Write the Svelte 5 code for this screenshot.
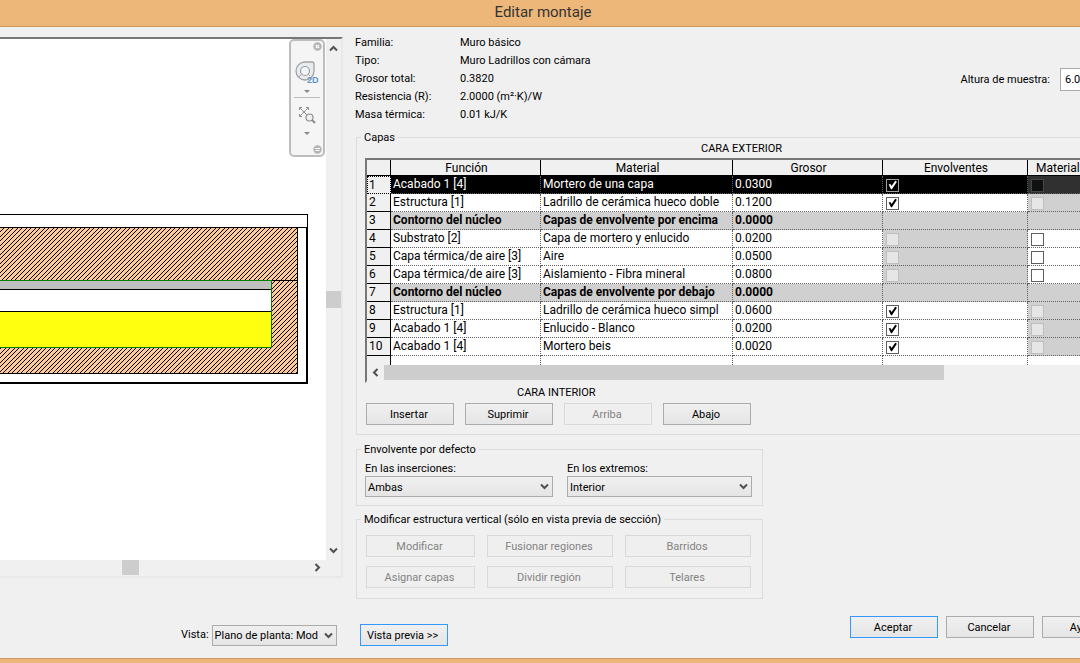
<script lang="ts">
  interface Layer {
    fn: string;
    material: string;
    thickness: string;
    wraps?: boolean;
    core?: boolean;
    structural?: boolean;
  }

  const info = [
    ['Familia:', 'Muro básico'],
    ['Tipo:', 'Muro Ladrillos con cámara'],
    ['Grosor total:', '0.3820'],
    ['Resistencia (R):', '2.0000 (m²·K)/W'],
    ['Masa térmica:', '0.01 kJ/K']
  ];

  // wraps / structural: left out means the box is disabled for that layer
  const layers: Layer[] = [
    { fn: 'Acabado 1 [4]', material: 'Mortero de una capa', thickness: '0.0300', wraps: true },
    { fn: 'Estructura [1]', material: 'Ladrillo de cerámica hueco doble', thickness: '0.1200', wraps: true },
    { fn: 'Contorno del núcleo', material: 'Capas de envolvente por encima', thickness: '0.0000', core: true },
    { fn: 'Substrato [2]', material: 'Capa de mortero y enlucido', thickness: '0.0200', structural: true },
    { fn: 'Capa térmica/de aire [3]', material: 'Aire', thickness: '0.0500', structural: true },
    { fn: 'Capa térmica/de aire [3]', material: 'Aislamiento - Fibra mineral', thickness: '0.0800', structural: true },
    { fn: 'Contorno del núcleo', material: 'Capas de envolvente por debajo', thickness: '0.0000', core: true },
    { fn: 'Estructura [1]', material: 'Ladrillo de cerámica hueco simpl', thickness: '0.0600', wraps: true },
    { fn: 'Acabado 1 [4]', material: 'Enlucido - Blanco', thickness: '0.0200', wraps: true },
    { fn: 'Acabado 1 [4]', material: 'Mortero beis', thickness: '0.0020', wraps: true }
  ];

  const verticalTools = ['Modificar', 'Fusionar regiones', 'Barridos', 'Asignar capas', 'Dividir región', 'Telares'];

  let selected = $state(0);
</script>

{#snippet chevron(dir: string)}
  <svg class="chevron {dir}" width="9" height="9" viewBox="0 0 9 9" aria-hidden="true">
    <path d="M1 2.5 4.5 6 8 2.5" fill="none" stroke="#505050" stroke-width="2" />
  </svg>
{/snippet}

<div class="dialog">
  <header class="titlebar">Editar montaje</header>

  <main class="content">
    <section class="preview" aria-label="Vista previa">
      <div class="canvas">
        <svg class="wall" width="326" height="400" viewBox="0 0 326 400" shape-rendering="crispEdges" aria-hidden="true">
          <defs>
            <pattern id="brick" width="9" height="9" patternUnits="userSpaceOnUse">
              <rect width="9" height="9" fill="#ffca99" />
              <path
                d="M8 0h1v1h-1zM7 1h1v1h-1zM6 2h1v1h-1zM5 3h1v1h-1zM4 4h1v1h-1zM3 5h1v1h-1zM2 6h1v1h-1zM1 7h1v1h-1zM0 8h1v1h-1z
                   M3 0h1v1h-1zM2 1h1v1h-1zM1 2h1v1h-1zM0 3h1v1h-1zM8 4h1v1h-1zM7 5h1v1h-1zM6 6h1v1h-1zM5 7h1v1h-1zM4 8h1v1h-1z"
                fill="#000"
              />
            </pattern>
          </defs>
          <path d="M0 175h308v14h-308z" fill="#000" />
          <path d="M0 176h307v12h-307z" fill="#fff" />
          <path d="M306 188h2v157h-308v-2h306z" fill="#000" />
          <rect y="189" width="297" height="145" fill="url(#brick)" />
          <path d="M297 189h1v146h-298v-1h297zM272 241h25v1h-25z" fill="#000" />
          <rect y="241" width="272" height="68" fill="#008000" />
          <rect y="242" width="271" height="8" fill="#c0c0c0" />
          <rect y="251" width="271" height="21" fill="#fff" />
          <path d="M0 250h271v1h-271zM0 272h271v1h-271z" fill="#000" />
          <rect y="273" width="271" height="35" fill="#ffff10" />
        </svg>

        <div class="navbar">
          <button class="mini" aria-label="Cerrar">
            <svg width="9" height="9" viewBox="0 0 9 9"><circle cx="4.5" cy="4.5" r="4.2" fill="#b4b4b4" /><path d="m2.8 2.8 3.4 3.4m0-3.4L2.8 6.2" stroke="#fff" stroke-width="1.2" /></svg>
          </button>
          <button class="wheel" aria-label="Rueda de navegación 2D">
            <svg width="26" height="26" viewBox="0 0 26 26">
              <path d="M2 12a9 9 0 0 1 9-9h7a2 2 0 0 1 2 2v7a9 9 0 0 1-18 0Z" fill="#e8ecee" stroke="#a2a2a2" stroke-width="1.3" />
              <circle cx="11" cy="12" r="4.5" fill="#f4f5f6" stroke="#9c9ca4" stroke-width="1.2" />
              <path d="m5 18 3-3.500M14 15l2 2" stroke="#aaa" />
              <text x="13" y="24" class="two-d">2D</text>
            </svg>
          </button>
          <span class="tri"></span>
          <hr />
          <button class="zoom" aria-label="Zoom">
            <svg width="18" height="18" viewBox="0 0 18 18" fill="none" stroke="#8e8e8e">
              <path d="M2 2l8 8M10 2l-8 8M1.5 4V1.5H4M8 1.5h2.5V4M1.5 8v2.5H4" />
              <circle cx="11.5" cy="11.5" r="3.5" fill="#edf1f3" stroke-width="1.2" />
              <path d="m14 14 3 3" stroke-width="2" />
            </svg>
          </button>
          <span class="tri"></span>
          <button class="mini last" aria-label="Opciones">
            <svg width="9" height="9" viewBox="0 0 9 9"><circle cx="4.5" cy="4.5" r="4.2" fill="#b4b4b4" /><path d="M2 3.5h5M2.5 5.5h4" stroke="#fff" /></svg>
          </button>
        </div>
      </div>
      <div class="vbar">
        {@render chevron('up')}
        <span class="thumb"></span>
        {@render chevron('down')}
      </div>
      <div class="hbar">
        <span class="thumb"></span>
        {@render chevron('right')}
      </div>
    </section>

    <section class="settings">
      <div class="summary">
        <dl>
          {#each info as [name, value]}
            <dt>{name}</dt>
            <dd>{value}</dd>
          {/each}
        </dl>
        <div class="sample">
          <label for="sample-height">Altura de muestra:</label>
          <input id="sample-height" type="text" value="6.0000" />
        </div>
      </div>

      <fieldset class="layers">
        <legend>Capas</legend>
        <div class="face exterior">CARA EXTERIOR</div>
        <div class="grid">
          <table>
            <colgroup>
              <col class="c-num" /><col class="c-fn" /><col class="c-mat" /><col class="c-thick" /><col class="c-wrap" /><col />
            </colgroup>
            <thead>
              <tr>
                <th></th>
                <th>Función</th>
                <th>Material</th>
                <th>Grosor</th>
                <th>Envolventes</th>
                <th class="cut">Material</th>
              </tr>
            </thead>
            <tbody>
              {#each layers as layer, i}
                <tr class:selected={i === selected} class:core={layer.core} onclick={() => (selected = i)}>
                  <th scope="row">{i + 1}</th>
                  <td>{layer.fn}</td>
                  <td>{layer.material}</td>
                  <td>{layer.thickness}</td>
                  <td class:off={!layer.wraps}>
                    {#if !layer.core}
                      <input type="checkbox" aria-label="Envolventes {i + 1}" checked={layer.wraps} disabled={!layer.wraps} />
                    {/if}
                  </td>
                  <td class:off={!layer.structural}>
                    {#if !layer.core}
                      <input type="checkbox" aria-label="Material estructural {i + 1}" disabled={!layer.structural} />
                    {/if}
                  </td>
                </tr>
              {/each}
              <tr class="rest"><th></th><td></td><td></td><td></td><td></td><td></td></tr>
            </tbody>
          </table>
          <div class="gridbar">
            {@render chevron('left')}
            <span class="thumb"></span>
          </div>
        </div>
        <div class="face interior">CARA INTERIOR</div>
        <div class="actions">
          <button class="btn">Insertar</button>
          <button class="btn">Suprimir</button>
          <button class="btn" disabled>Arriba</button>
          <button class="btn">Abajo</button>
        </div>
      </fieldset>

      <fieldset class="wrapping">
        <legend>Envolvente por defecto</legend>
        <div class="field">
          <label for="inserts">En las inserciones:</label>
          <div class="select">
            <select id="inserts"><option>Ambas</option></select>
            {@render chevron('down')}
          </div>
        </div>
        <div class="field">
          <label for="ends">En los extremos:</label>
          <div class="select">
            <select id="ends"><option>Interior</option></select>
            {@render chevron('down')}
          </div>
        </div>
      </fieldset>

      <fieldset class="vertical">
        <legend>Modificar estructura vertical (sólo en vista previa de sección)</legend>
        <div class="tools">
          {#each verticalTools as tool}
            <button class="btn" disabled>{tool}</button>
          {/each}
        </div>
      </fieldset>
    </section>
  </main>

  <footer>
    <div class="view">
      <label for="view">Vista:</label>
      <div class="select">
        <select id="view"><option>Plano de planta: Mod</option></select>
        {@render chevron('down')}
      </div>
      <button class="btn focus">Vista previa &gt;&gt;</button>
    </div>
    <div class="confirm">
      <button class="btn focus">Aceptar</button>
      <button class="btn">Cancelar</button>
      <button class="btn">Ayuda</button>
    </div>
  </footer>
</div>

<style>
  :global(body) {
    background: #f0f0f0;
  }

  .dialog,
  .dialog * {
    box-sizing: border-box;
  }

  .dialog {
    --ui: Roboto, 'Open Sans', sans-serif;
    display: flex;
    flex-direction: column;
    min-height: 100vh;
    overflow: hidden;
    background: #f0f0f0;
    border-bottom: 4px solid #edb77a;
    box-shadow: inset 0 -1px #c99a66;
    font: 11px/12px var(--ui);
    color: #000;
  }

  .titlebar {
    height: 27px;
    padding-left: 6px;
    background: #edb77a;
    border-bottom: 1px solid #cd9b62;
    font-size: 15px;
    line-height: 24px;
    text-align: center;
    color: #333;
  }

  .content {
    display: flex;
  }

  button,
  input,
  select {
    margin: 0;
    font: inherit;
    color: inherit;
  }

  .chevron {
    display: block;
  }

  .up {
    transform: rotate(180deg);
  }

  .left {
    transform: rotate(90deg);
  }

  .right {
    transform: rotate(-90deg);
  }

  .thumb {
    background: #cdcdcd;
  }

  /* preview pane */
  .preview {
    flex: 0 0 343px;
    display: grid;
    grid-template-columns: 1fr 15px;
    grid-template-rows: 1fr 16px;
    margin: 10px 1px 21px 0;
    border-top: 2px solid #777;
    border-right: 2px solid #e8e8e8;
    border-bottom: 2px solid #e8e8e8;
  }

  .canvas {
    position: relative;
    background: #fff;
  }

  .wall {
    display: block;
  }

  .navbar {
    position: absolute;
    top: 0;
    right: 1px;
    display: flex;
    flex-direction: column;
    align-items: center;
    width: 36px;
    height: 118px;
    padding: 1px;
    background: #f5f5f5;
    border: 2px solid #bdbdbd;
    border-radius: 5px;
  }

  .navbar button {
    display: block;
    padding: 0;
    border: 0;
    background: none;
  }

  .navbar svg {
    display: block;
  }

  .navbar .mini {
    align-self: flex-end;
  }

  .navbar .last {
    margin-top: auto;
  }

  .wheel {
    margin-top: 8px;
  }

  .two-d {
    font: bold 9px 'Liberation Sans', sans-serif;
    fill: #5f94c4;
  }

  .tri {
    margin-top: 5px;
    border: 3px solid transparent;
    border-top-color: #888;
    border-bottom: 0;
  }

  .navbar hr {
    width: 26px;
    margin: 4px 0 8px;
    border: 0;
    border-top: 1px solid #bcbcbc;
  }

  .zoom + .tri {
    margin-top: 8px;
  }

  .vbar {
    display: flex;
    flex-direction: column;
    align-items: center;
    justify-content: space-between;
    padding: 5px 0;
  }

  .vbar .thumb {
    width: 15px;
    height: 17px;
  }

  .hbar {
    display: flex;
    align-items: center;
    padding: 0 4px 1px 122px;
  }

  .hbar .thumb {
    width: 17px;
    height: 15px;
    margin-right: auto;
  }

  /* right side */
  .settings {
    flex: 1;
    min-width: 0;
  }

  .summary {
    display: flex;
    justify-content: space-between;
    padding: 7px 0 6px 11px;
  }

  dl {
    display: grid;
    grid-template-columns: 105px auto;
    margin: 0;
    line-height: 18px;
  }

  dd {
    margin: 0;
  }

  .sample {
    display: flex;
    align-items: center;
    gap: 10px;
    height: 23px;
    margin: 34px -45px 0 0;
  }

  .sample input {
    width: 65px;
    height: 23px;
    padding: 0 4px;
    background: #fff;
    border: 1px solid #ababab;
  }

  fieldset {
    min-width: 0;
    margin: 0 0 0 12px;
    padding: 0 11px 0 9px;
    border: 1px solid #dcdcdc;
  }

  legend {
    margin-left: -5px;
    padding: 2px 3px 0;
    line-height: 12px;
  }

  .layers {
    padding: 0 0 9px 8px;
    border-right: 0;
  }

  .layers legend {
    margin-left: -4px;
  }

  .face {
    line-height: 10px;
  }

  .exterior {
    height: 14px;
    padding-left: 336px;
  }

  .interior {
    height: 20px;
    padding-left: 152px;
    line-height: 20px;
  }

  .grid {
    border: 2px solid #777;
    border-right: 0;
    border-bottom-color: #f0f0f0;
    background: #f0f0f0;
  }

  table {
    width: 100%;
    table-layout: fixed;
    border-collapse: separate;
    border-spacing: 0;
    background: #fff;
    font: 12px/14px var(--ui);
  }

  .c-num {
    width: 24px;
  }

  .c-fn,
  .c-thick {
    width: 150px;
  }

  .c-mat {
    width: 192px;
  }

  .c-wrap {
    width: 145px;
  }

  thead th {
    height: 16px;
    padding: 0 0 0 2px;
    background: #f0f0f0;
    border-right: 1px solid #000;
    border-bottom: 1px solid #000;
    font-weight: 400;
  }

  thead .cut {
    padding-left: 8px;
    border-right: 0;
    text-align: left;
    white-space: nowrap;
  }

  td {
    height: 18px;
    padding: 0 0 1px 2px;
    border-right: 1px dotted #606060;
    border-bottom: 1px dotted #606060;
    white-space: nowrap;
  }

  td:last-child {
    border-right: 0;
  }

  tbody th {
    padding: 0 0 1px 2px;
    background: #f0f0f0;
    border-right: 1px solid #000;
    border-bottom: 1px solid #000;
    font-weight: 400;
    text-align: left;
  }

  .off {
    background: #d0d0d0;
  }

  .core td {
    background: #d0d0d0;
    font-weight: 700;
  }

  .selected td {
    background: #000;
    color: #fff;
  }

  .selected .off {
    background: #303030;
  }

  .selected th {
    border: 1px dotted #000;
    padding-left: 1px;
  }

  .rest td,
  .rest th {
    height: 9px;
    padding: 0;
    border-bottom: 0;
  }

  td input {
    appearance: none;
    display: block;
    width: 13px;
    height: 13px;
    margin: 2px 0 0 1px;
    background: #fff;
    border: 1px solid #606060;
  }

  td input:checked::before {
    content: '';
    display: block;
    width: 11px;
    height: 11px;
    background: #000;
    clip-path: polygon(15% 45%, 30% 40%, 42% 60%, 75% 12%, 90% 20%, 45% 88%, 36% 88%);
  }

  td input:disabled {
    background: #e6e6e6;
    border-color: #bfbfbf;
  }

  .selected td input {
    background: #000;
    border-color: #a0a0a0;
  }

  .selected td input:checked::before {
    background: #fff;
  }

  .selected td input:disabled {
    background: #101010;
    border-color: #404848;
  }

  .gridbar {
    display: flex;
    align-items: center;
    height: 16px;
    padding: 0 0 1px 4px;
  }

  .gridbar .thumb {
    width: 79%;
    height: 15px;
    margin-left: 4px;
  }

  .actions {
    display: flex;
    gap: 11px;
    padding-left: 1px;
  }

  .btn {
    width: 88px;
    height: 22px;
    padding: 2px 2px 0 0;
    background: linear-gradient(#f0f0f0, #e5e5e5);
    border: 1px solid #acacac;
    border-radius: 0;
    text-align: center;
    white-space: nowrap;
  }

  .btn:disabled {
    background: #efefef;
    border-color: #d9d9d9;
    color: #838383;
  }

  .btn.focus {
    border-color: #3399ff;
  }

  .wrapping,
  .vertical {
    width: 407px;
  }

  .wrapping {
    display: grid;
    grid-template-columns: 188px 185px;
    gap: 14px;
    margin-top: 7px;
    padding: 7px 10px 8px 8px;
  }

  .wrapping legend {
    margin-left: -4px;
  }

  .field {
    display: flex;
    flex-direction: column;
    gap: 1px;
  }

  .select {
    position: relative;
  }

  .select select {
    display: block;
    appearance: none;
    width: 100%;
    height: 21px;
    padding: 2px 14px 0 2px;
    background: linear-gradient(#f0f0f0, #e5e5e5);
    border: 1px solid #acacac;
    border-radius: 0;
    white-space: nowrap;
    overflow: hidden;
  }

  .select :global(.chevron) {
    position: absolute;
    top: 6px;
    right: 4px;
    pointer-events: none;
  }

  .vertical {
    margin-top: 6px;
    padding-top: 9px;
    padding-bottom: 10px;
  }

  .tools {
    display: grid;
    grid-template-columns: 109px 126px 126px;
    gap: 9px 12px;
  }

  .tools .btn {
    width: 100%;
  }

  footer {
    display: flex;
    justify-content: space-between;
    padding-top: 17px;
  }

  .view {
    display: flex;
    align-items: center;
    gap: 3px;
    height: 22px;
    margin: 8px 0 0 181px;
  }

  .view .select {
    width: 125px;
  }

  .view .btn {
    margin-left: 20px;
  }

  .confirm {
    display: flex;
    gap: 8px;
    margin-right: -50px;
  }
</style>
